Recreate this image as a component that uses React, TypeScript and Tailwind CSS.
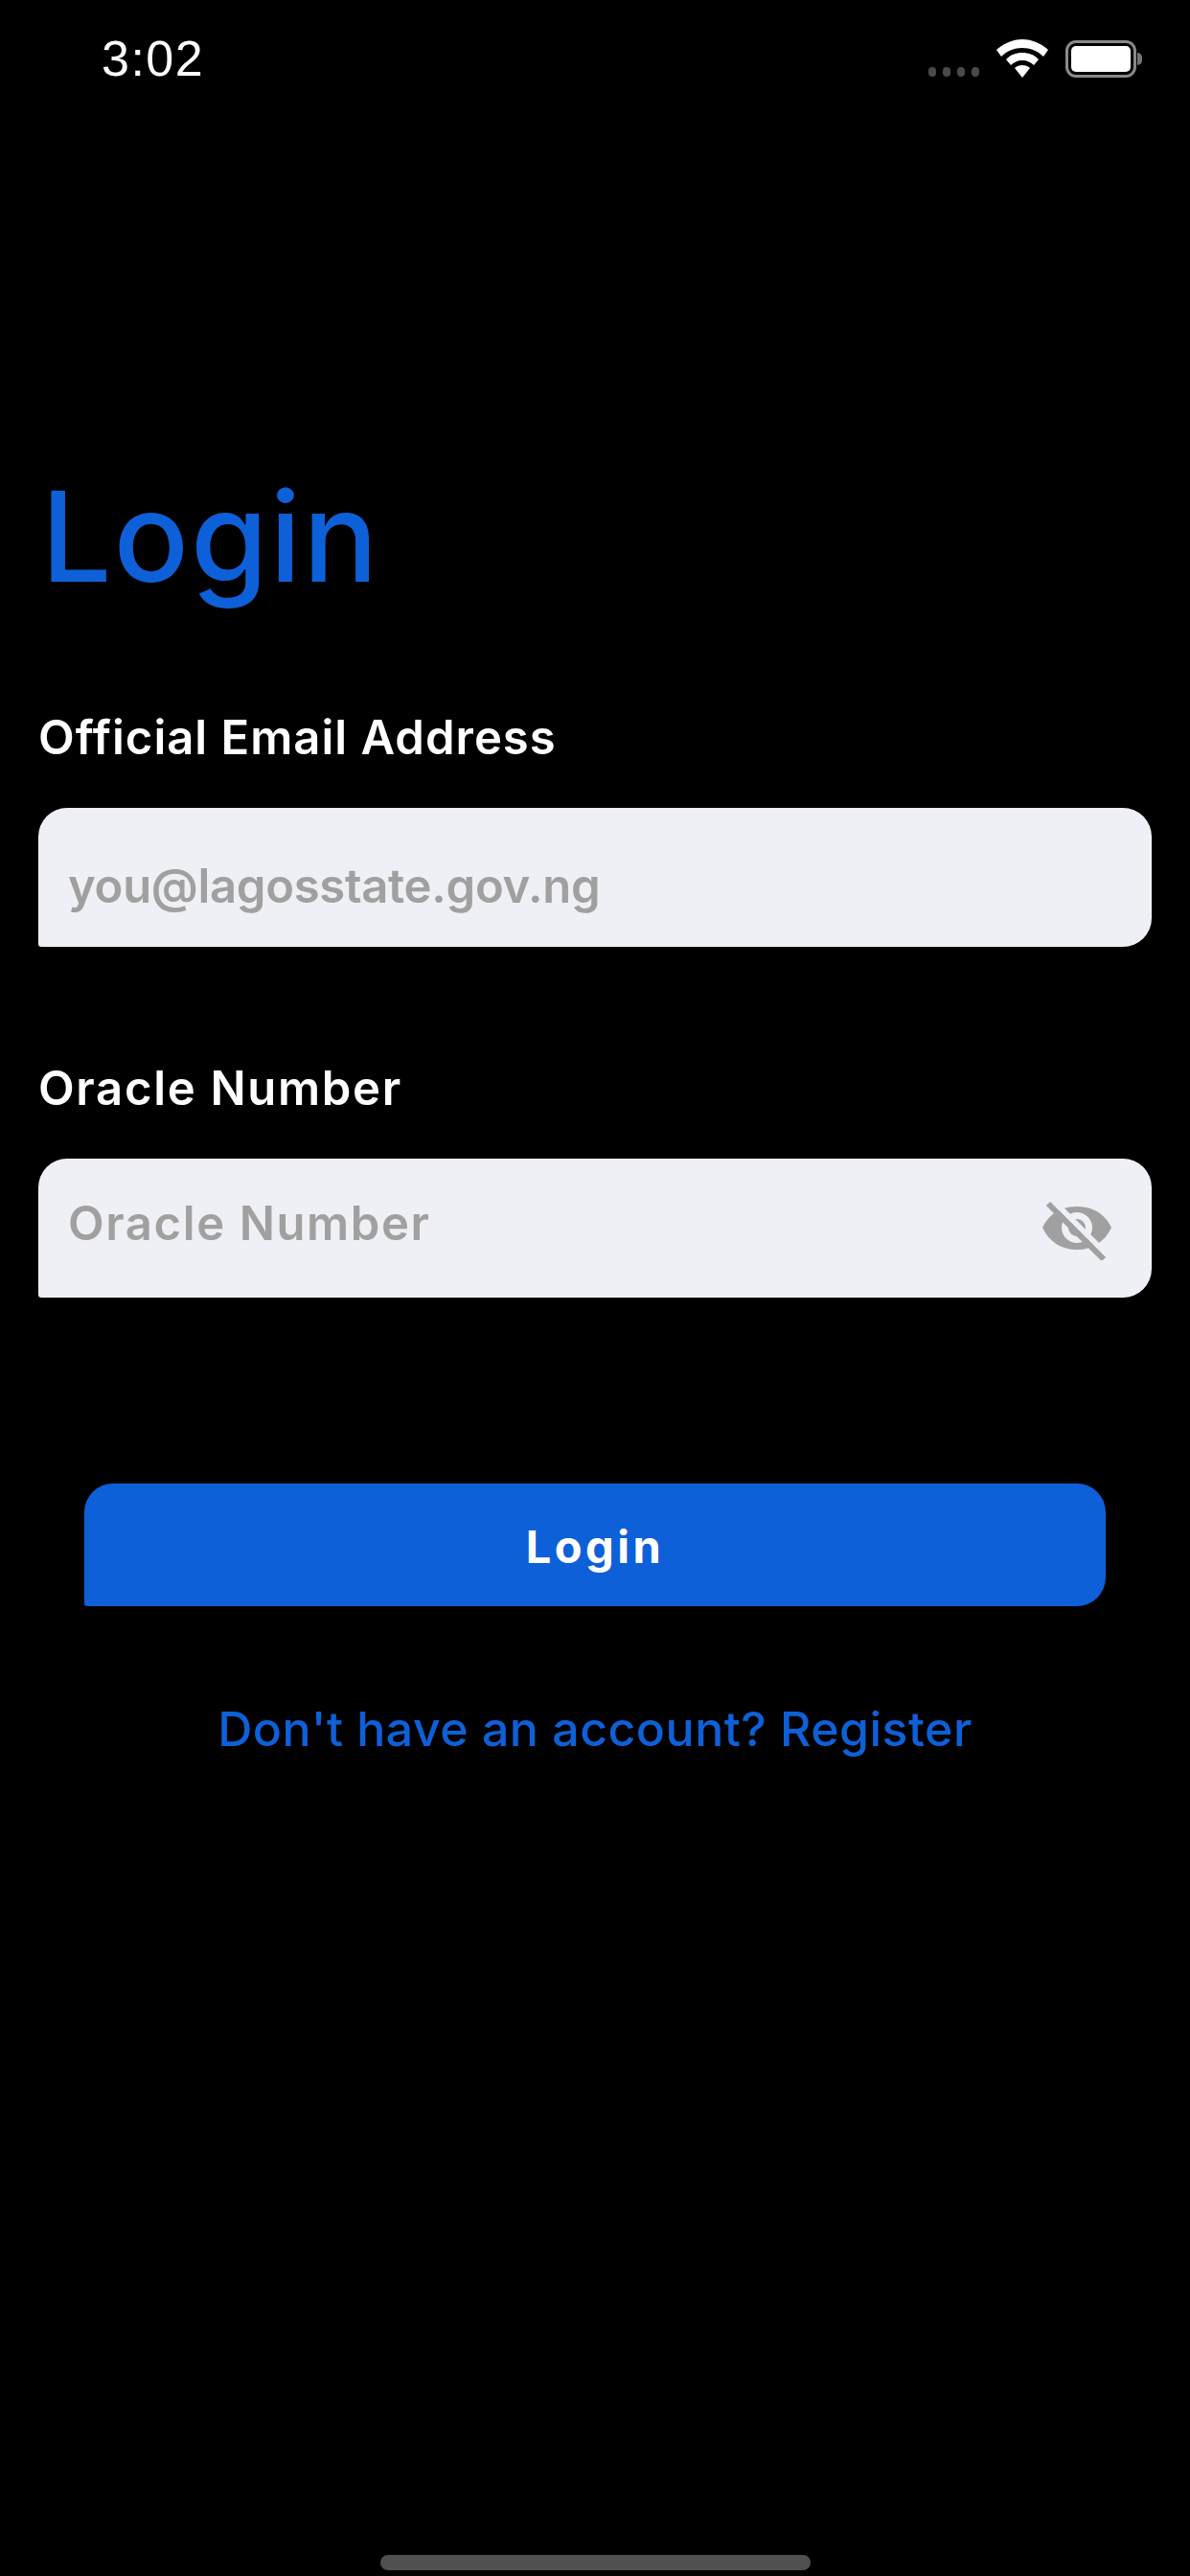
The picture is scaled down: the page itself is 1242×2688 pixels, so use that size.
const EyeOff = () => (
  <svg width="76" height="66" viewBox="0 0 76 66">
    <path
      fillRule="evenodd"
      fill="#a0a0a0"
      d="M2 32C9 17 22 10 38 10s29 7 36 22C67 47 54 55 38 55S9 47 2 32ZM38 16a16 16 0 1 0 0 32 16 16 0 0 0 0-32Z"
    />
    <circle cx="38" cy="32" r="9" fill="#a0a0a0" />
    <path d="M12 3 L70 61" stroke="#eef0f5" strokeWidth="6" />
    <path d="M8 7 L66 65" stroke="#a0a0a0" strokeWidth="6" />
  </svg>
);

const Wifi = () => (
  <svg width="54" height="40" viewBox="0 0 54 40">
    <path fill="#fff" d="M27 0C17 0 8 4 0 11l5 7c6-6 14-9 22-9s16 3 22 9l5-7C46 4 37 0 27 0Z" />
    <path fill="#fff" d="M27 14c-7 0-12 2-17 7l5 6c3-3 7-5 12-5s9 2 12 5l5-6c-5-5-10-7-17-7Z" />
    <path fill="#fff" d="M27 27c-3 0-6 1-8 3l8 10 8-10c-2-2-5-3-8-3Z" />
  </svg>
);

const Battery = () => (
  <div className="flex items-center">
    <div className="w-[74px] h-[39px] rounded-[11px] border-[3px] border-[#8a8a8a] p-[3px]">
      <div className="w-full h-full bg-white rounded-[5px]" />
    </div>
    <div className="w-[5px] h-[13px] ml-[1px] bg-[#777] rounded-r-full" />
  </div>
);

type FieldProps = {
  label: string;
  placeholder: string;
  icon?: boolean;
  className?: string;
  labelClass?: string;
  placeholderClass?: string;
};

function Field({ label, placeholder, icon, className, labelClass, placeholderClass }: FieldProps) {
  return (
    <div className={className}>
      <label className={`block text-[49px] leading-[56px] font-semibold text-white ${labelClass}`}>{label}</label>
      <div className="mt-[45px] h-[145px] bg-[#eef0f5] rounded-[30px] rounded-bl-[3px] flex items-center justify-between pl-[31px] pr-[40px]">
        <span className={`text-[49px] font-semibold text-[#a0a0a0] ${placeholderClass}`}>{placeholder}</span>
        {icon && <EyeOff />}
      </div>
    </div>
  );
}

export default function App() {
  return (
    <div className="w-[1242px] h-[2688px] bg-black flex flex-col font-['Inter',sans-serif]">
      <div className="h-[122px] flex items-start justify-between pl-[106px] pr-[50px] pt-[41px]">
        <span className="text-[52px] leading-[41px] text-white font-['Liberation_Sans',sans-serif] tracking-[1.5px]">3:02</span>
        <div className="flex items-center">
          <div className="flex gap-[7px] self-end mb-[1px] mr-[18px]">
            <span className="w-[8px] h-[10px] rounded-full bg-[#4a4a4a]" />
            <span className="w-[8px] h-[10px] rounded-full bg-[#4a4a4a]" />
            <span className="w-[8px] h-[10px] rounded-full bg-[#4a4a4a]" />
            <span className="w-[8px] h-[10px] rounded-full bg-[#4a4a4a]" />
          </div>
          <Wifi />
          <div className="ml-[18px]">
            <Battery />
          </div>
        </div>
      </div>

      <div className="px-[40px] flex-1 flex flex-col">
        <h1 className="mt-[368px] text-[130px] leading-[140px] font-medium text-[#0e60d9] pl-[3px] tracking-[2px]">Login</h1>
        <Field
          label="Official Email Address"
          placeholder="you@lagosstate.gov.ng"
          className="mt-[112px]"
          labelClass="tracking-[1px]"
          placeholderClass="tracking-[-0.3px] mt-[18px]"
        />
        <Field
          label="Oracle Number"
          placeholder="Oracle Number"
          icon
          className="mt-[120px]"
          labelClass="tracking-[1.7px]"
          placeholderClass="tracking-[1.6px] -mt-[9px]"
        />

        <button type="button" className="mx-[48px] mt-[194px] h-[128px] pt-[4px] bg-[#0e60d9] rounded-[30px] rounded-bl-[3px] text-white text-[47px] font-bold tracking-[3.5px]">
          Login
        </button>
        <p className="mt-[98px] text-center text-[50px] leading-[60px] font-medium text-[#0e60d9] tracking-[0.5px]">
          Don't have an account? Register
        </p>
      </div>

      <div className="h-[22px] flex justify-center">
        <div className="w-[449px] h-[16px] rounded-full bg-[#505050]" />
      </div>
    </div>
  );
}
